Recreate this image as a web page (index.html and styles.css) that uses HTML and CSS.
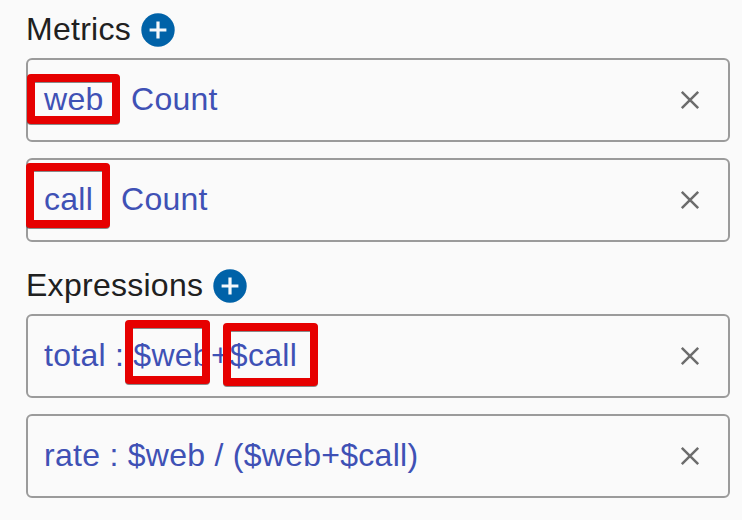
FILE: index.html
```html
<!DOCTYPE html>
<html lang="en">
<head>
<meta charset="utf-8">
<title>Metrics</title>
<link rel="stylesheet" href="styles.css">
</head>
<body>
<svg class="defs" width="0" height="0"><defs>
<symbol id="add" viewBox="0 0 34 34"><circle cx="17" cy="17" r="16.7" fill="#0062a8"/><path d="M17 8.6v16.8M8.6 17h16.8" stroke="#f4f8fb" stroke-width="3.2"/></symbol>
<symbol id="close" viewBox="0 0 20 20"><path d="M1.8 1.8l16.4 16.4M18.2 1.8L1.8 18.2" stroke="#6c6c6c" stroke-width="2.5"/></symbol>
</defs></svg>
<section class="group">
<h2 class="title"><span class="t1">Metrics</span><svg class="add"><use href="#add"/></svg></h2>
<div class="row"><span class="text"><span class="w1">web</span><span class="w2">Count</span></span><svg class="close"><use href="#close"/></svg><i class="mark m1"></i></div>
<div class="row"><span class="text"><span class="w3">call</span><span class="w2">Count</span></span><svg class="close"><use href="#close"/></svg><i class="mark m2"></i></div>
</section>
<section class="group">
<h2 class="title"><span class="t2">Expressions</span><svg class="add"><use href="#add"/></svg></h2>
<div class="row"><span class="text"><span class="name">total</span> : $web+$call</span><svg class="close"><use href="#close"/></svg><i class="mark m3"></i><i class="mark m4"></i></div>
<div class="row"><span class="text"><span class="name">rate</span> : $web / ($web+$call)</span><svg class="close"><use href="#close"/></svg></div>
</section>
</body>
</html>
```
FILE: styles.css
```css
* { box-sizing: border-box; }
body { margin: 0; padding: 2px 12px 0 26px; background: #fafafa; font: 32px/40px "Liberation Sans", Arial, sans-serif; letter-spacing: .27px; height: 520px; overflow: hidden; }
.defs { display: block; }
.title { display: flex; align-items: center; height: 56px; margin: 0; font-size: 32px; font-weight: 400; color: #202020; }
.t1, .t2, .text { padding-bottom: 2px; }
.t1 { width: 115px; }
.t2 { width: 187px; }
.add { width: 34px; height: 34px; }
.row { position: relative; display: flex; align-items: center; justify-content: space-between; height: 84px; margin-bottom: 16px; padding: 0 28px 0 16px; border: 2px solid #9b9b9b; border-radius: 6px; color: #3f51b5; }
.text { display: flex; white-space: pre; }
.w1 { width: 87px; }
.w3 { width: 77px; }
.close { width: 20px; height: 20px; }
.mark { position: absolute; border: 8px solid #e60000; border-radius: 4px; filter: drop-shadow(0 1px 0 rgba(0, 0, 0, .45)); }
.m1 { left: -1px; top: 14px; width: 93px; height: 50px; }
.m2 { left: -2px; top: 3px; width: 84px; height: 65px; }
.m3 { left: 97px; top: 4px; width: 85px; height: 64px; }
.m4 { left: 195px; top: 7px; width: 95px; height: 63px; }
```
